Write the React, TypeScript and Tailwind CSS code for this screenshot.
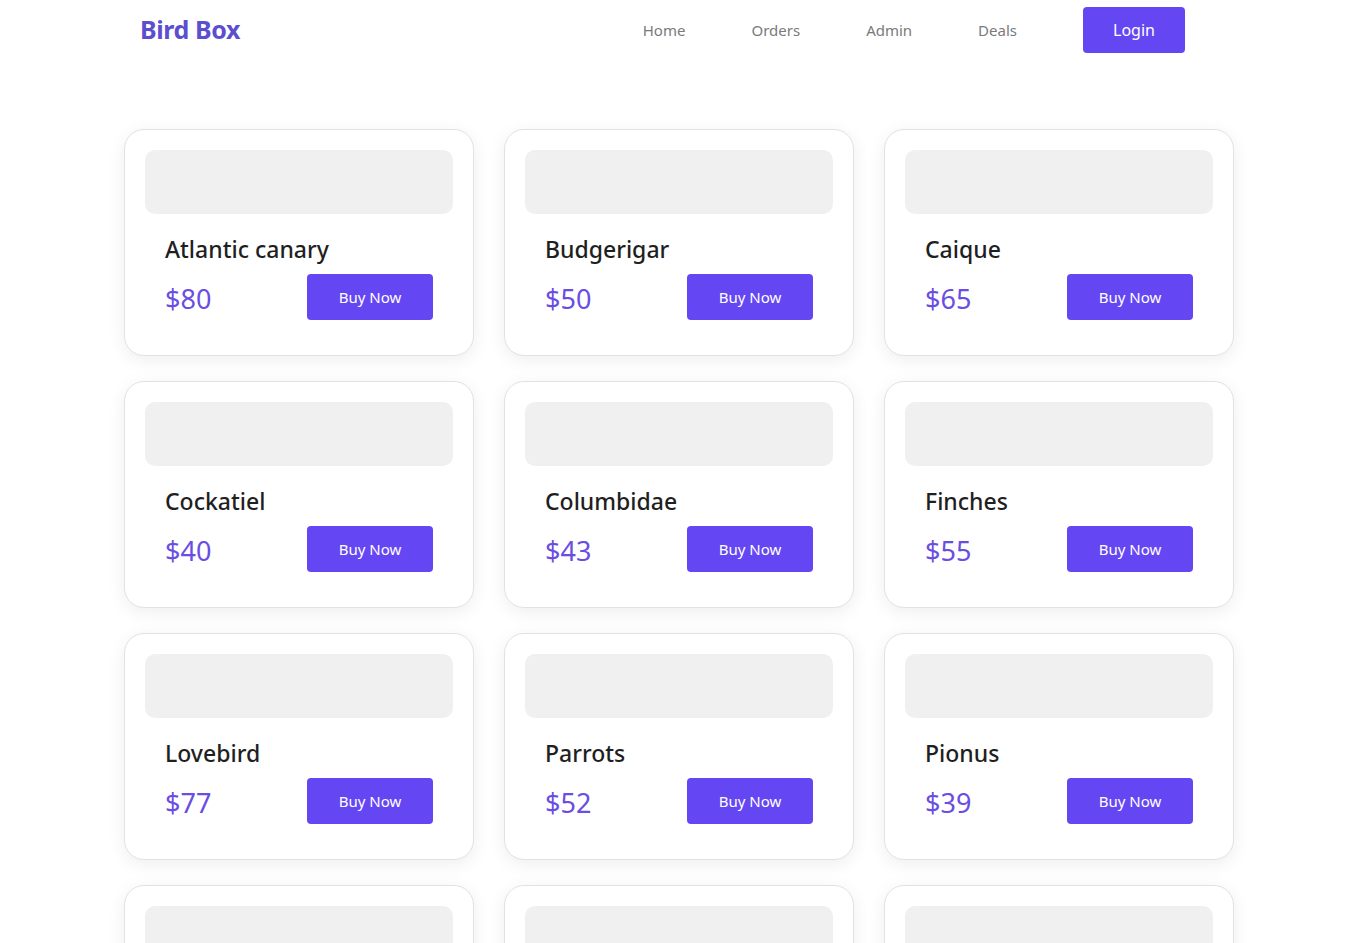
import React from "react";

const birds = [
  { name: "Atlantic canary", price: 80 },
  { name: "Budgerigar", price: 50 },
  { name: "Caique", price: 65 },
  { name: "Cockatiel", price: 40 },
  { name: "Columbidae", price: 43 },
  { name: "Finches", price: 55 },
  { name: "Lovebird", price: 77 },
  { name: "Parrots", price: 52 },
  { name: "Pionus", price: 39 },
  { name: "Rosella", price: 60 },
  { name: "Sparrow", price: 20 },
  { name: "Toucan", price: 90 },
];

export default function App() {
  return (
    <div className="min-h-screen bg-white" style={{ fontFamily: '"Noto Sans", "Open Sans", sans-serif' }}>
      <header className="flex items-center h-[60px] pl-[140px] pr-[168px]">
        <div className="text-[25px] font-bold text-[#5b4fd0] tracking-[-0.4px]">Bird Box</div>
        <nav className="ml-auto flex items-center">
          <a className="text-[15px] text-[#7a7a7a] mr-[66px]">Home</a>
          <a className="text-[15px] text-[#7a7a7a] mr-[66px]">Orders</a>
          <a className="text-[15px] text-[#7a7a7a] mr-[66px]">Admin</a>
          <a className="text-[15px] text-[#7a7a7a] mr-[66px]">Deals</a>
          <button className="w-[102px] h-[46px] rounded-[4px] bg-[#6447f2] text-white text-[16px]">Login</button>
        </nav>
      </header>
      <main className="pt-[69px] pl-[124px] pr-[120px]">
        <div className="grid grid-cols-[350px_350px_350px] gap-x-[30px] gap-y-[25px]">
          {birds.map((b) => (
            <div
              key={b.name}
              className="h-[227px] rounded-[20px] border border-[#e2e2e2] bg-white p-[20px] shadow-[0_4px_18px_rgba(0,0,0,0.07)]"
            >
              <div className="h-[64px] rounded-[10px] bg-[#f0f0f0]" />
              <div className="px-[20px]">
                <div className="mt-[19px] text-[23px] leading-[32px] font-medium text-[#1f1f1f]">{b.name}</div>
                <div className="mt-[9px] flex items-center justify-between">
                  <div className="pt-[4px] text-[27px] leading-[36px] text-[#6a4de3]">${b.price}</div>
                  <button className="w-[126px] h-[46px] rounded-[4px] bg-[#6447f2] text-white text-[15px]">Buy Now</button>
                </div>
              </div>
            </div>
          ))}
        </div>
      </main>
    </div>
  );
}
